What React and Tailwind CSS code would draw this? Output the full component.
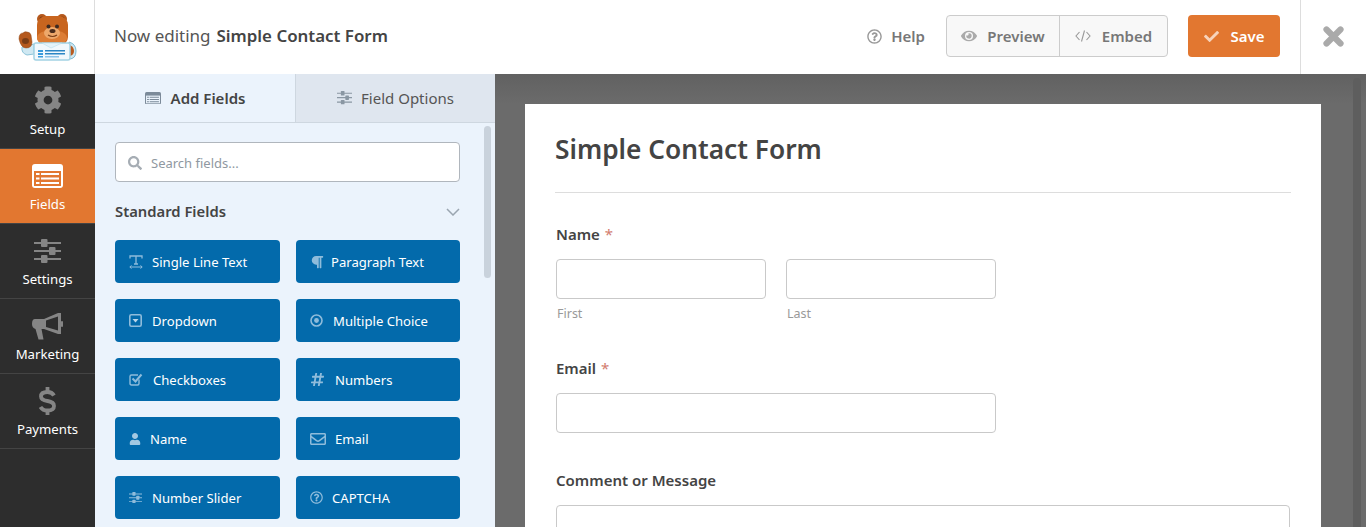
import {
  FaCog, FaSearch, FaParagraph, FaHashtag, FaUser, FaRegEnvelope, FaRegQuestionCircle, FaEye, FaCheck,
} from 'react-icons/fa';

const ListAlt = ({ bg, fill, className }) => (
  <svg className={className} viewBox="0 0 31 24">
    <rect width="31" height="24" rx="3" fill={fill} />
    <rect x="2" y="7" width="27" height="15" fill={bg} />
    <path d="M4 9h3.500v2H4zM9 9h18v2H9zM4 13.500h3.500v2H4zM9 13.500h18v2H9zM4 18h3.500v2H4zM9 18h18v2H9z" fill={fill} />
  </svg>
);

const Sliders = ({ className, color }) => (
  <svg className={className} viewBox="0 0 27 24" fill={color}>
    <path d="M0 3h27v2H0zM0 11h27v2H0zM0 19h27v2H0z" />
    <rect x="7" y="0" width="6.500" height="8" rx="1" />
    <rect x="15" y="8" width="6.500" height="8" rx="1" />
    <rect x="7" y="16" width="6.500" height="8" rx="1" />
  </svg>
);

const Bullhorn = ({ className }) => (
  <svg className={className} viewBox="0 0 31 27">
    <path
      d="M3 6H12L26 0H29V21H26L12 16H9.500L11.500 26.500H6.500L3.500 16Q0 15 0 11Q0 6 3 6Z M14 7.500V14L26 17.500V3.500Z"
      fill="#858585"
      fillRule="evenodd"
    />
    <rect x="29" y="8" width="2" height="6" rx="1" fill="#858585" />
  </svg>
);

const Dollar = ({ className }) => (
  <svg className={className} viewBox="0 0 17 30" fill="none" stroke="#858585" strokeWidth="3.800">
    <path d="M15 9.500Q13 6 8.500 6Q2 6 2 10.500Q2 14 8.500 15Q15 16 15 20Q15 24.500 8.500 24.500Q3.500 24.500 1.500 21" />
    <path d="M8.500 1v5M8.500 24v5" />
  </svg>
);

const TextWidthIcon = ({ className }) => (
  <svg className={className} viewBox="0 0 14 14" fill="none" stroke="#8fbcdb" strokeWidth="1.300">
    <path d="M1 3.500V1H13V3.500M7 1V9M5 9H9" />
    <path d="M1 12H13" strokeWidth="1" />
    <path d="M2.500 10.500L.8 12L2.500 13.500M11.500 10.500L13.200 12L11.500 13.500" strokeWidth="1" />
  </svg>
);

const DropdownIcon = ({ className }) => (
  <svg className={className} viewBox="0 0 13 13">
    <rect x=".8" y=".8" width="11.400" height="11.400" rx="1.500" fill="none" stroke="#8fbcdb" strokeWidth="1.600" />
    <path d="M3.500 5H9.500L6.500 8.500Z" fill="#bcd7ea" />
  </svg>
);

const CheckIcon = ({ className }) => (
  <svg className={className} viewBox="0 0 14 13" fill="none" stroke="#8fbcdb">
    <path d="M10 6.500V10.500Q10 12 8.500 12H2.500Q1 12 1 10.500V3.500Q1 2 2.500 2H9" strokeWidth="1.400" />
    <path d="M3.500 5.500L6.500 8.500L12.500 1.500" strokeWidth="2" />
  </svg>
);

const DotIcon = ({ className }) => (
  <svg className={className} viewBox="0 0 13 13">
    <circle cx="6.500" cy="6.500" r="5.500" fill="none" stroke="#8fbcdb" strokeWidth="1.600" />
    <circle cx="6.500" cy="6.500" r="2.400" fill="#8fbcdb" />
  </svg>
);

const SmallSliders = ({ className }) => <Sliders className={className} color="#8fbcdb" />;

const nav = [
  { label: 'Setup', icon: <FaCog className="mb-[2px] text-[28px] text-[#858585]" /> },
  { label: 'Fields', icon: <ListAlt className="w-[31px]" bg="#e27730" fill="#fff" />, active: true },
  { label: 'Settings', icon: <Sliders className="w-[27px]" color="#858585" /> },
  { label: 'Marketing', icon: <Bullhorn className="mt-[1px] w-[31px]" /> },
  { label: 'Payments', icon: <Dollar className="w-[17px]" /> },
];

const fields = [
  { label: 'Single Line Text', icon: <TextWidthIcon className="w-[14px]" />, w: 'w-[23px]' },
  { label: 'Paragraph Text', icon: <FaParagraph className="text-[14px] text-[#8fbcdb]" />, w: 'w-[21px]' },
  { label: 'Dropdown', icon: <DropdownIcon className="w-[13px]" />, w: 'w-[23px]' },
  { label: 'Multiple Choice', icon: <DotIcon className="w-[13px]" />, w: 'w-[23px]' },
  { label: 'Checkboxes', icon: <CheckIcon className="w-[14px]" />, w: 'w-[24px]' },
  { label: 'Numbers', icon: <FaHashtag className="text-[15px] text-[#8fbcdb]" />, w: 'w-[25px]' },
  { label: 'Name', icon: <FaUser className="text-[12px] text-[#a3c8e2]" />, w: 'w-[21px]' },
  { label: 'Email', icon: <FaRegEnvelope className="text-[16px] text-[#8fbcdb]" />, w: 'w-[25px]' },
  { label: 'Number Slider', icon: <SmallSliders className="w-[13px]" />, w: 'w-[23px]' },
  { label: 'CAPTCHA', icon: <FaRegQuestionCircle className="text-[13px] text-[#8fbcdb]" />, w: 'w-[22px]' },
];

function Logo() {
  return (
    <svg width="60" height="47" viewBox="18 13 60 47">
      <path d="M34 43 L22 46 Q21 52 27 54 L34 53Z" fill="#cfe8f2" stroke="#8cc3d8" />
      <path d="M69 41 Q76 43 76 50 Q76 58 69 58Z" fill="#cfe8f2" stroke="#7fbad2" />
      <path d="M70 44 Q74 46 74 50 Q74 54 70 55Z" fill="#b95b1f" />
      <circle cx="42" cy="18" r="5" fill="#b5591d" />
      <circle cx="62" cy="18" r="5" fill="#b5591d" />
      <circle cx="42" cy="18" r="2.500" fill="#7d3d14" />
      <circle cx="62" cy="18" r="2.500" fill="#7d3d14" />
      <rect x="37" y="15" width="31" height="30" rx="9" fill="#c8651f" />
      <ellipse cx="52" cy="37" rx="15" ry="8" fill="#dc7d35" />
      <ellipse cx="52" cy="32" rx="8" ry="6" fill="#eda86b" />
      <circle cx="48.500" cy="25.500" r="2" fill="#3c2a22" />
      <circle cx="57" cy="25.500" r="2" fill="#3c2a22" />
      <ellipse cx="52.500" cy="30" rx="3" ry="2" fill="#4a2c1c" />
      <path d="M48 34 q4.500 3 9 0" stroke="#7a3d16" strokeWidth="1.200" fill="none" />
      <rect x="34" y="42" width="36" height="17" rx="2" fill="#f1f8fc" stroke="#a3d2e3" strokeWidth="1.500" />
      <path d="M42 42 L51 47 L62 42Z" fill="#e4f3f9" stroke="#b5dbe9" strokeWidth=".6" />
      <path d="M38 49h5v2h-5zM38 52h5v2h-5zM38 55h5v1.500h-5z" fill="#3a9bdc" />
      <path d="M45 49h20v1.500H45zM45 52h20v1.500H45z" fill="#2b86c5" />
      <path d="M45 55h14v1.500H45z" fill="#8cc3e8" />
      <path d="M19 38 Q19 32 23 32 Q25 30 27 31 Q30 31 31 34 L32 41 Q32 47 26 47 Q21 47 19 38Z" fill="#b5591d" stroke="#8e4415" strokeWidth=".5" />
      <ellipse cx="25.500" cy="40" rx="3.500" ry="3" fill="#7a3d16" />
    </svg>
  );
}

function TextInput({ className }) {
  return <div className={`h-10 rounded border border-[#c9c9c9] bg-white ${className}`} />;
}

function Label({ children }) {
  return (
    <div className="text-[15px] leading-5 font-semibold text-[#444]">
      {children} <span className="ml-[1px] font-normal text-[#d27c6e]">*</span>
    </div>
  );
}

export default function App() {
  return (
    <div className="flex h-[527px] w-[1366px] flex-col overflow-hidden bg-white font-['Noto_Sans',sans-serif]">
      <header className="flex h-[74px] shrink-0 items-center">
        <div className="flex h-full w-[95px] shrink-0 items-center border-r border-[#dddddd] pl-[18px]">
          <Logo />
        </div>
        <div className="mb-[2px] ml-[19px] flex-1 text-[17px] text-[#555]">
          Now editing <span className="ml-[1.500px] text-[16.900px] font-semibold text-[#444]">Simple Contact Form</span>
        </div>
        <div className="mb-[2px] flex items-center gap-[9px] text-[15px] font-semibold text-[#777]">
          <FaRegQuestionCircle className="text-[15px] text-[#999]" />
          <span>Help</span>
        </div>
        <div className="mb-[2px] ml-[21px] flex h-[42px] items-center rounded border border-[#cccccc] bg-[#f8f8f8] text-[15px] font-semibold text-[#777]">
          <div className="flex h-full w-[113px] items-center justify-center gap-[10px] border-r border-[#cccccc]">
            <FaEye className="text-[16px] text-[#aaa]" />
            <span>Preview</span>
          </div>
          <div className="flex h-full w-[107px] items-center justify-center gap-[11px]">
            <svg width="16" height="12" viewBox="0 0 16 12" fill="none" stroke="#999" strokeWidth="1.100">
              <path d="M4.500 2 L1 6 L4.500 10 M11.500 2 L15 6 L11.500 10 M9.500 .5 L6.500 11.500" />
            </svg>
            <span>Embed</span>
          </div>
        </div>
        <div className="mb-[2px] ml-[20px] flex h-[42px] w-[92px] items-center justify-center gap-[11px] rounded bg-[#e27730] pl-[1px] text-[15px] font-semibold text-white">
          <FaCheck className="text-[15px] text-[#f7d3bb]" />
          <span>Save</span>
        </div>
        <div className="ml-[20px] flex h-full w-[66px] items-center justify-center border-l border-[#dddddd] pb-[1px]">
          <svg width="21" height="21" viewBox="0 0 21 21" stroke="#aaa" strokeWidth="6.200" strokeLinecap="round">
            <path d="M3.500 3.500L17.500 17.500M17.500 3.500L3.500 17.500" />
          </svg>
        </div>
      </header>

      <div className="flex min-h-0 flex-1">
        <nav className="w-[95px] shrink-0 bg-[#2d2d2d]">
          {nav.map(({ label, icon, active }) => (
            <div
              key={label}
              className={`flex h-[75px] flex-col items-center border-b border-[#444] pt-[11px] text-[13.200px] leading-5 text-white ${active ? 'bg-[#e27730]' : ''}`}
            >
              <div className="flex h-[32px] items-center justify-center">{icon}</div>
              <span className="mt-[2px]">{label}</span>
            </div>
          ))}
        </nav>

        <aside className="relative flex w-[400px] shrink-0 flex-col bg-[#ebf3fc]">
          <div className="flex h-[49px] shrink-0 border-b border-[#ced7e0] text-[15px] text-[#444]">
            <div className="flex w-[201px] items-center justify-center gap-[10px] border-r border-[#ced7e0] font-semibold">
              <ListAlt className="w-[16px]" bg="#ebf3fc" fill="#7b8a99" />
              <span>Add Fields</span>
            </div>
            <div className="flex flex-1 items-center justify-center gap-[9px] bg-[#dfe6ef] text-[#555]">
              <Sliders className="w-[15px]" color="#8a97a3" />
              <span>Field Options</span>
            </div>
          </div>

          <div className="pt-[19px] pl-[20px] pr-[35px]">
            <div className="flex h-10 items-center gap-[9px] rounded border border-[#b0b6bd] bg-white pl-[12px] pt-[1px] text-[13px] text-[#8f98a1]">
              <FaSearch className="text-[14px] text-[#a6adb4]" />
              <span className="mt-[2px]">Search fields...</span>
            </div>
            <div className="mt-[19px] flex h-[21px] items-center justify-between">
              <span className="text-[14.800px] font-semibold text-[#444]">Standard Fields</span>
              <svg width="14" height="8" viewBox="0 0 14 8" fill="none" stroke="#9aa5b0" strokeWidth="1.500">
                <path d="M1 1L7 7L13 1" />
              </svg>
            </div>
            <div className="mt-[18px] grid grid-cols-[165px_164px] gap-x-[16px] gap-y-[16px]">
              {fields.map(({ label, icon, w }) => (
                <div key={label} className="flex h-[43px] items-center rounded bg-[#036aab] pl-[14px] text-[13.100px] text-white">
                  <div className={`flex shrink-0 items-center ${w}`}>{icon}</div>
                  <span className="mt-[2px]">{label}</span>
                </div>
              ))}
            </div>
          </div>

          <div className="absolute top-[52px] right-[4px] h-[152px] w-[7px] rounded bg-[#c9d2dc]" />

          <svg className="absolute top-[256px] left-[400px]" width="15" height="52" viewBox="0 0 15 52">
            <path d="M0 0 C1 6 15 6 15 16 V36 C15 46 1 46 0 52 Z" fill="#ebf3fc" />
          </svg>
          <svg className="absolute top-[276px] left-[400px]" width="8" height="11" viewBox="0 0 8 11" fill="none" stroke="#8f9aa5" strokeWidth="1.500">
            <path d="M6.500 .5L1.500 5.500L6.500 10.500" />
          </svg>
        </aside>

        <main className="relative flex-1 overflow-hidden bg-[linear-gradient(#616161,#6b6b6b_30px)] pt-[30px] pl-[30px]">
          <div className="w-[796px] bg-white px-[30px] pt-[26px]">
            <h1 className="text-[26.300px] leading-[38px] font-semibold text-[#444]">Simple Contact Form</h1>
            <div className="mt-[24px] border-b border-[#dddddd]" />
            <div className="pl-[1px]">
              <div className="mt-[31px]">
                <Label>Name</Label>
                <div className="mt-[15px] flex gap-[20px]">
                  <div className="w-[210px]">
                    <TextInput />
                    <div className="mt-[6px] pl-[1px] text-[12.500px] leading-[18px] text-[#999]">First</div>
                  </div>
                  <div className="w-[210px]">
                    <TextInput />
                    <div className="mt-[6px] pl-[1px] text-[12.500px] leading-[18px] text-[#999]">Last</div>
                  </div>
                </div>
              </div>
              <div className="mt-[35px]">
                <Label>Email</Label>
                <TextInput className="mt-[15px] w-[440px]" />
              </div>
              <div className="mt-[37px]">
                <div className="text-[15px] leading-5 font-semibold text-[#444]">Comment or Message</div>
                <TextInput className="mt-[15px] h-[120px] w-[734px]" />
              </div>
            </div>
          </div>
          <div className="absolute top-[4px] right-[5px] h-[500px] w-[8px] rounded bg-[#5e5e5e]" />
        </main>
      </div>
    </div>
  );
}
